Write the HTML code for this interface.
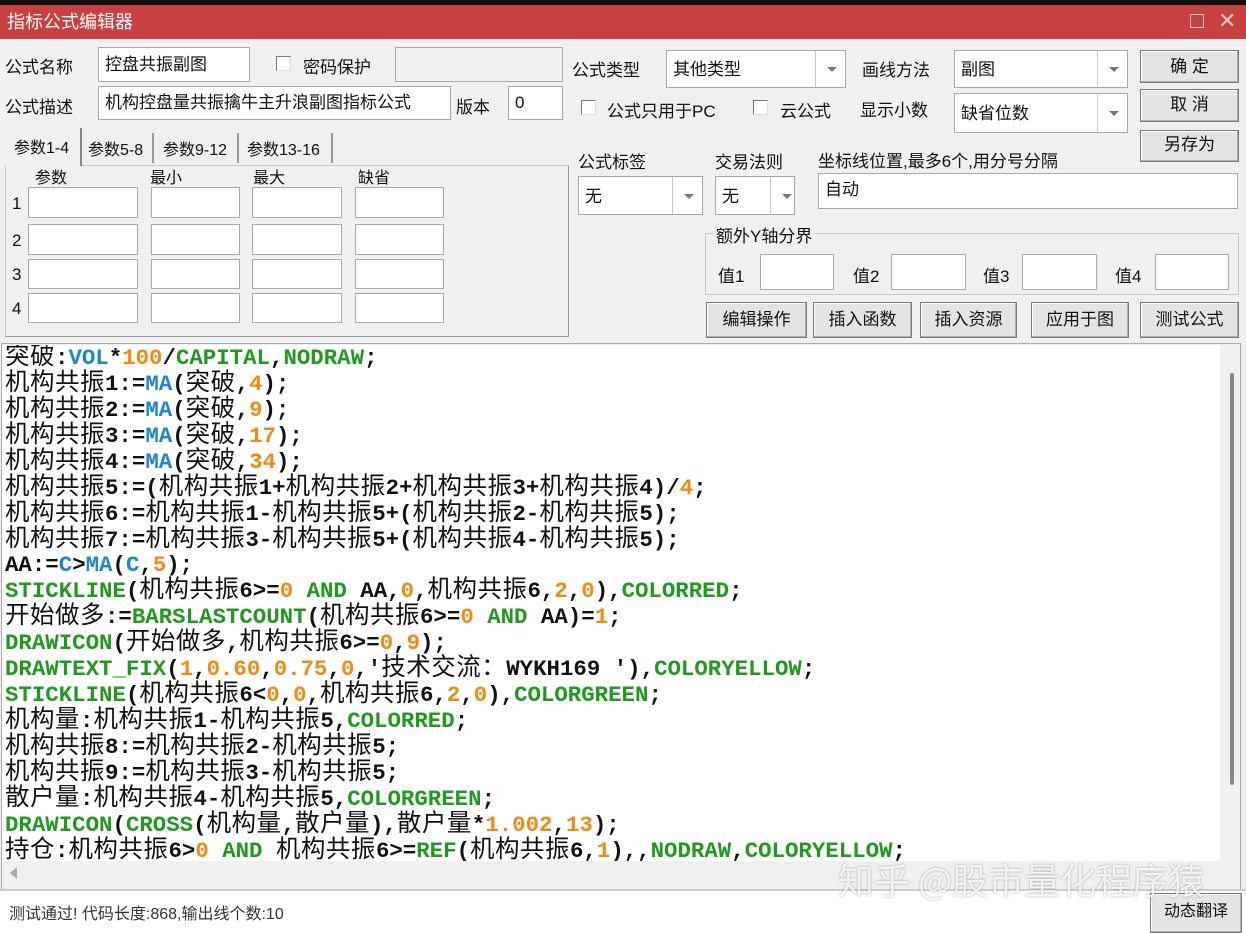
<!DOCTYPE html>
<html><head><meta charset="utf-8"><style>
*{margin:0;padding:0;box-sizing:border-box}
body{width:1246px;height:933px;background:#f0f0f0;position:relative;overflow:hidden;font-family:"Liberation Sans","Noto Sans CJK SC",sans-serif;font-size:17px;color:#111}
.a{position:absolute}
.inp{position:absolute;background:#fff;border:1px solid #a8a8a8;padding:0 6px;line-height:30px;font-size:17px;white-space:nowrap;overflow:hidden}
.btn{position:absolute;background:#e4e4e4;border:1px solid #7a7a7a;box-shadow:inset -1px -1px 0 #b0b0b0,inset 1px 1px 0 #fff;text-align:center;font-size:17px}
.cb{position:absolute;width:15px;height:15px;border:1px solid #777;background:#fff;border-right-color:#ddd;border-bottom-color:#ddd}
.combo{position:absolute;background:#fff;border:1px solid #a8a8a8;font-size:17px;padding-left:6px}
.combo .ar{position:absolute;right:0;top:0;bottom:0;width:30px;border-left:1px solid #c8c8c8}
.combo .ar:after{content:"";position:absolute;left:11px;top:50%;margin-top:-2px;border-left:5px solid transparent;border-right:5px solid transparent;border-top:5px solid #777}
#code{position:absolute;left:2px;top:345px;width:1218px;height:516px;background:#fff;overflow:hidden;font-family:"Liberation Mono",monospace;font-size:22.4px;font-weight:bold;color:#111;padding-left:3px}
#code div{height:25.95px;line-height:25.95px;white-space:pre;overflow:visible}
#code .c{font-family:"Noto Sans CJK SC",sans-serif;font-weight:normal;font-size:24.5px;letter-spacing:0.5px;line-height:20px}
.g{color:#1f9a1f}.b{color:#1c86d0}.o{color:#f08a10}
</style></head><body>
<div class="a" style="left:0;top:0;width:1246px;height:5px;background:#111"></div>
<div class="a" style="left:0;top:5px;width:1246px;height:34px;background:#c8403f;color:#fff;font-size:18px;line-height:34px;padding-left:7px">指标公式编辑器</div>
<div class="a" style="left:1190px;top:14px;width:14px;height:14px;border:1.5px solid #f4caca"></div>
<div class="a" style="left:1218px;top:6px;color:#f4caca;font-size:22px;line-height:30px">✕</div>

<div class="a" style="left:5px;top:53px">公式名称</div>
<div class="inp" style="left:98px;top:47px;width:152px;height:35px;line-height:33px">控盘共振副图</div>
<div class="cb" style="left:276px;top:56px"></div>
<div class="a" style="left:303px;top:53px">密码保护</div>
<div class="inp" style="left:395px;top:47px;width:168px;height:35px;background:#f0f0f0"></div>
<div class="a" style="left:5px;top:93px">公式描述</div>
<div class="inp" style="left:98px;top:86px;width:353px;height:34px;line-height:32px">机构控盘量共振擒牛主升浪副图指标公式</div>
<div class="a" style="left:456px;top:93px">版本</div>
<div class="inp" style="left:508px;top:86px;width:55px;height:34px;line-height:32px">0</div>

<div class="a" style="left:5px;top:165px;width:564px;height:172px;border:1px solid #c8c8c8;border-right-color:#999;border-bottom-color:#999"></div>
<div class="a" style="left:6px;top:128px;width:76px;height:38px;background:#f0f0f0;border-right:2px solid #888;font-size:16px;padding:6px 0 0 8px">参数1-4</div>
<div class="a" style="left:88px;top:136px;font-size:16px">参数5-8</div>
<div class="a" style="left:152px;top:133px;width:2px;height:30px;background:#999"></div>
<div class="a" style="left:163px;top:136px;font-size:16px">参数9-12</div>
<div class="a" style="left:237px;top:133px;width:2px;height:30px;background:#999"></div>
<div class="a" style="left:247px;top:136px;font-size:16px">参数13-16</div>
<div class="a" style="left:331px;top:133px;width:2px;height:30px;background:#999"></div>
<div class="a" style="left:35px;top:164px;font-size:16px">参数</div>
<div class="a" style="left:150px;top:164px;font-size:16px">最小</div>
<div class="a" style="left:253px;top:164px;font-size:16px">最大</div>
<div class="a" style="left:358px;top:164px;font-size:16px">缺省</div>
<div class="a" style="left:12px;top:194px">1</div><div class="a" style="left:12px;top:231px">2</div><div class="a" style="left:12px;top:265px">3</div><div class="a" style="left:12px;top:299px">4</div>
<div class="inp" style="left:28px;top:187px;width:110px;height:31px"></div><div class="inp" style="left:151px;top:187px;width:89px;height:31px"></div><div class="inp" style="left:252px;top:187px;width:90px;height:31px"></div><div class="inp" style="left:355px;top:187px;width:89px;height:31px"></div>
<div class="inp" style="left:28px;top:224px;width:110px;height:31px"></div><div class="inp" style="left:151px;top:224px;width:89px;height:31px"></div><div class="inp" style="left:252px;top:224px;width:90px;height:31px"></div><div class="inp" style="left:355px;top:224px;width:89px;height:31px"></div>
<div class="inp" style="left:28px;top:259px;width:110px;height:30px"></div><div class="inp" style="left:151px;top:259px;width:89px;height:30px"></div><div class="inp" style="left:252px;top:259px;width:90px;height:30px"></div><div class="inp" style="left:355px;top:259px;width:89px;height:30px"></div>
<div class="inp" style="left:28px;top:293px;width:110px;height:30px"></div><div class="inp" style="left:151px;top:293px;width:89px;height:30px"></div><div class="inp" style="left:252px;top:293px;width:90px;height:30px"></div><div class="inp" style="left:355px;top:293px;width:89px;height:30px"></div>

<div class="a" style="left:572px;top:56px">公式类型</div>
<div class="combo" style="left:666px;top:50px;width:180px;height:38px;line-height:38px">其他类型<div class="ar"></div></div>
<div class="a" style="left:862px;top:56px">画线方法</div>
<div class="combo" style="left:954px;top:50px;width:174px;height:38px;line-height:38px">副图<div class="ar"></div></div>
<div class="btn" style="left:1140px;top:50px;width:99px;height:33px;line-height:31px">确 定</div>
<div class="btn" style="left:1140px;top:89px;width:99px;height:33px;line-height:29px">取 消</div>
<div class="btn" style="left:1140px;top:130px;width:99px;height:32px;line-height:28px">另存为</div>
<div class="cb" style="left:581px;top:100px"></div>
<div class="a" style="left:607px;top:97px">公式只用于PC</div>
<div class="cb" style="left:753px;top:100px"></div>
<div class="a" style="left:780px;top:97px">云公式</div>
<div class="a" style="left:860px;top:96px">显示小数</div>
<div class="combo" style="left:954px;top:93px;width:174px;height:40px;line-height:40px">缺省位数<div class="ar"></div></div>
<div class="a" style="left:578px;top:148px">公式标签</div>
<div class="a" style="left:715px;top:148px">交易法则</div>
<div class="a" style="left:818px;top:147px">坐标线位置,最多6个,用分号分隔</div>
<div class="combo" style="left:578px;top:176px;width:125px;height:39px;line-height:39px">无<div class="ar"></div></div>
<div class="combo" style="left:715px;top:176px;width:80px;height:39px;line-height:39px">无<div class="ar" style="width:24px"></div></div>
<div class="inp" style="left:818px;top:173px;width:420px;height:36px;line-height:32px">自动</div>
<div class="a" style="left:705px;top:233px;width:534px;height:62px;border:1px solid #c8c8c8"></div>
<div class="a" style="left:713px;top:222px;background:#f0f0f0;padding:0 3px">额外Y轴分界</div>
<div class="a" style="left:718px;top:262px">值1</div><div class="inp" style="left:760px;top:254px;width:74px;height:36px"></div>
<div class="a" style="left:853px;top:262px">值2</div><div class="inp" style="left:891px;top:254px;width:75px;height:36px"></div>
<div class="a" style="left:983px;top:262px">值3</div><div class="inp" style="left:1022px;top:254px;width:75px;height:36px"></div>
<div class="a" style="left:1115px;top:262px">值4</div><div class="inp" style="left:1155px;top:254px;width:74px;height:36px"></div>
<div class="btn" style="left:706px;top:302px;width:101px;height:36px;line-height:34px">编辑操作</div>
<div class="btn" style="left:813px;top:302px;width:99px;height:36px;line-height:34px">插入函数</div>
<div class="btn" style="left:920px;top:302px;width:97px;height:36px;line-height:34px">插入资源</div>
<div class="btn" style="left:1031px;top:302px;width:98px;height:36px;line-height:34px">应用于图</div>
<div class="btn" style="left:1140px;top:302px;width:99px;height:36px;line-height:34px">测试公式</div>

<div class="a" style="left:1px;top:343px;width:1240px;height:547px;border:1px solid #aaa"></div>
<div id="code">
<div><span class="c">突破</span>:<span class="b">VOL</span>*<span class="o">100</span>/<span class="g">CAPITAL</span>,<span class="g">NODRAW</span>;</div>
<div><span class="c">机构共振</span>1:=<span class="b">MA</span>(<span class="c">突破</span>,<span class="o">4</span>);</div>
<div><span class="c">机构共振</span>2:=<span class="b">MA</span>(<span class="c">突破</span>,<span class="o">9</span>);</div>
<div><span class="c">机构共振</span>3:=<span class="b">MA</span>(<span class="c">突破</span>,<span class="o">17</span>);</div>
<div><span class="c">机构共振</span>4:=<span class="b">MA</span>(<span class="c">突破</span>,<span class="o">34</span>);</div>
<div><span class="c">机构共振</span>5:=(<span class="c">机构共振</span>1+<span class="c">机构共振</span>2+<span class="c">机构共振</span>3+<span class="c">机构共振</span>4)/<span class="o">4</span>;</div>
<div><span class="c">机构共振</span>6:=<span class="c">机构共振</span>1-<span class="c">机构共振</span>5+(<span class="c">机构共振</span>2-<span class="c">机构共振</span>5);</div>
<div><span class="c">机构共振</span>7:=<span class="c">机构共振</span>3-<span class="c">机构共振</span>5+(<span class="c">机构共振</span>4-<span class="c">机构共振</span>5);</div>
<div>AA:=<span class="b">C</span>&gt;<span class="b">MA</span>(<span class="b">C</span>,<span class="o">5</span>);</div>
<div><span class="g">STICKLINE</span>(<span class="c">机构共振</span>6&gt;=<span class="o">0</span> <span class="g">AND</span> AA,<span class="o">0</span>,<span class="c">机构共振</span>6,<span class="o">2</span>,<span class="o">0</span>),<span class="g">COLORRED</span>;</div>
<div><span class="c">开始做多</span>:=<span class="g">BARSLASTCOUNT</span>(<span class="c">机构共振</span>6&gt;=<span class="o">0</span> <span class="g">AND</span> AA)=<span class="o">1</span>;</div>
<div><span class="g">DRAWICON</span>(<span class="c">开始做多</span>,<span class="c">机构共振</span>6&gt;=<span class="o">0</span>,<span class="o">9</span>);</div>
<div><span class="g">DRAWTEXT_FIX</span>(<span class="o">1</span>,<span class="o">0.60</span>,<span class="o">0.75</span>,<span class="o">0</span>,'<span class="c">技术交流：</span>WYKH169 '),<span class="g">COLORYELLOW</span>;</div>
<div><span class="g">STICKLINE</span>(<span class="c">机构共振</span>6&lt;<span class="o">0</span>,<span class="o">0</span>,<span class="c">机构共振</span>6,<span class="o">2</span>,<span class="o">0</span>),<span class="g">COLORGREEN</span>;</div>
<div><span class="c">机构量</span>:<span class="c">机构共振</span>1-<span class="c">机构共振</span>5,<span class="g">COLORRED</span>;</div>
<div><span class="c">机构共振</span>8:=<span class="c">机构共振</span>2-<span class="c">机构共振</span>5;</div>
<div><span class="c">机构共振</span>9:=<span class="c">机构共振</span>3-<span class="c">机构共振</span>5;</div>
<div><span class="c">散户量</span>:<span class="c">机构共振</span>4-<span class="c">机构共振</span>5,<span class="g">COLORGREEN</span>;</div>
<div><span class="g">DRAWICON</span>(<span class="g">CROSS</span>(<span class="c">机构量</span>,<span class="c">散户量</span>),<span class="c">散户量</span>*<span class="o">1.002</span>,<span class="o">13</span>);</div>
<div><span class="c">持仓</span>:<span class="c">机构共振</span>6&gt;<span class="o">0</span> <span class="g">AND</span> <span class="c">机构共振</span>6&gt;=<span class="g">REF</span>(<span class="c">机构共振</span>6,<span class="o">1</span>),,<span class="g">NODRAW</span>,<span class="g">COLORYELLOW</span>;</div>
</div>
<div class="a" style="left:1220px;top:345px;width:19px;height:516px;background:#f0f0f0"></div>
<div class="a" style="left:1230px;top:373px;width:4px;height:412px;background:#888;border-radius:2px"></div>
<div class="a" style="left:2px;top:861px;width:1238px;height:27px;background:#f0f0f0"></div>
<div class="a" style="left:10px;top:867px;border-top:6px solid transparent;border-bottom:6px solid transparent;border-right:7px solid #aaa"></div>
<div class="a" style="left:0;top:889px;width:1246px;height:44px;background:#fff;border-top:2px solid #ccc"></div>
<div class="a" style="left:9px;top:900px;font-size:16px;color:#333">测试通过! 代码长度:868,输出线个数:10</div>
<div class="btn" style="left:1150px;top:893px;width:92px;height:40px;line-height:36px;font-size:16px">动态翻译</div>
<div class="a" style="left:838px;top:853px;font-size:36px;color:rgba(255,255,255,0.85);text-shadow:0 0 2px rgba(0,0,0,0.35);white-space:nowrap;font-family:'Noto Sans CJK SC',sans-serif">知乎 @股市量化程序猿</div>
</body></html>
